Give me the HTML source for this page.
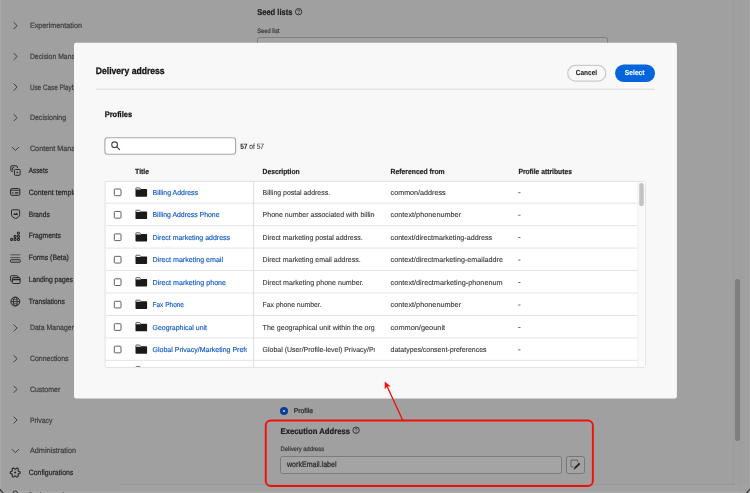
<!DOCTYPE html>
<html>
<head>
<meta charset="utf-8">
<title>Delivery address</title>
<style>
*{box-sizing:border-box;margin:0;padding:0}
html,body{width:750px;height:493px;overflow:hidden;background:#a7a7a7;font-family:"Liberation Sans",sans-serif;}
body{position:relative;color:#2c2c2c}
#win{position:absolute;left:1.3px;top:0;width:747.3px;height:490.8px;background:#a0a0a0;border-radius:0 0 4px 4px}
svg{position:absolute;overflow:visible}
svg.txt{left:0;top:0;will-change:transform;font-family:"Liberation Sans",sans-serif;text-rendering:geometricPrecision}
svg.txt svg{overflow:hidden;position:static}
</style>
</head>
<body>
<div id="win"></div>
<div style="position:absolute;left:121.3px;top:483.6px;width:612.5px;height:1px;background:#989898"></div>
<div style="position:absolute;left:121.3px;top:484.6px;width:627px;height:6.4px;background:#a2a2a2"></div>
<div style="position:absolute;left:733.3px;top:0;width:1px;height:484px;background:#9b9b9b"></div>
<div style="position:absolute;left:740.3px;top:0;width:1px;height:491px;background:#9c9c9c"></div>
<div style="position:absolute;left:257px;top:37.4px;width:350.5px;height:20px;border:1px solid #7e7e7e;border-radius:2.5px;background:#a3a3a3"></div>
<div style="position:absolute;left:279.8px;top:406.7px;width:8.1px;height:8.1px;border-radius:50%;background:#0a4099"></div>
<div style="position:absolute;left:282.9px;top:409.8px;width:2px;height:2px;border-radius:30%;background:#b9b9b9"></div>
<div style="position:absolute;left:280.2px;top:456.1px;width:282px;height:17.9px;border:1px solid #7c7c7c;border-radius:2.5px;background:#a4a4a4"></div>
<div style="position:absolute;left:566.1px;top:456.1px;width:18.9px;height:17.9px;border:1px solid #787878;border-radius:2.5px;background:#a3a3a3"></div>
<svg style="left:0;top:0" width="750" height="493" viewBox="0 0 750 493"><path d="M577.7 462.4 V460.1 H571.0 V466.8 H573.6" fill="none" stroke="#464646" stroke-width="0.65"/><path d="M579.7 463.3 L574.9 468.1" stroke="#222" stroke-width="1.9"/><path d="M574.1 467.4 L575.6 468.9 L573.5 469.6 Z" fill="#333"/></svg>
<div style="position:absolute;left:735px;top:278.8px;width:5px;height:162px;border-radius:2.5px;background:#7e7e7e"></div>
<svg style="left:0;top:0" width="750" height="493" viewBox="0 0 750 493"><path d="M13.90 22.50 L17.10 25.70 L13.90 28.90" fill="none" stroke="#3e3e3e" stroke-width="1.0" stroke-linecap="round" stroke-linejoin="round"/><path d="M13.90 53.30 L17.10 56.50 L13.90 59.70" fill="none" stroke="#3e3e3e" stroke-width="1.0" stroke-linecap="round" stroke-linejoin="round"/><path d="M13.90 83.90 L17.10 87.10 L13.90 90.30" fill="none" stroke="#3e3e3e" stroke-width="1.0" stroke-linecap="round" stroke-linejoin="round"/><path d="M13.90 114.50 L17.10 117.70 L13.90 120.90" fill="none" stroke="#3e3e3e" stroke-width="1.0" stroke-linecap="round" stroke-linejoin="round"/><path d="M12.20 147.30 L15.40 150.50 L18.60 147.30" fill="none" stroke="#3e3e3e" stroke-width="1.0" stroke-linecap="round" stroke-linejoin="round"/><path d="M13.90 324.80 L17.10 328.00 L13.90 331.20" fill="none" stroke="#3e3e3e" stroke-width="1.0" stroke-linecap="round" stroke-linejoin="round"/><path d="M13.90 355.50 L17.10 358.70 L13.90 361.90" fill="none" stroke="#3e3e3e" stroke-width="1.0" stroke-linecap="round" stroke-linejoin="round"/><path d="M13.90 386.20 L17.10 389.40 L13.90 392.60" fill="none" stroke="#3e3e3e" stroke-width="1.0" stroke-linecap="round" stroke-linejoin="round"/><path d="M13.90 416.90 L17.10 420.10 L13.90 423.30" fill="none" stroke="#3e3e3e" stroke-width="1.0" stroke-linecap="round" stroke-linejoin="round"/><path d="M12.20 449.50 L15.40 452.70 L18.60 449.50" fill="none" stroke="#3e3e3e" stroke-width="1.0" stroke-linecap="round" stroke-linejoin="round"/><path d="M13.0 171.2 H11.7 Q10.8 171.2 10.8 170.3 V166.7 Q10.8 165.8 11.7 165.8 H16.4 Q17.3 165.8 17.3 166.7 V168.0" fill="none" stroke="#262626" stroke-width="1.0"/><path d="M14.2 167.5 Q12.2 167.2 12.3 168.9 M12.3 169.6 L12.3 168.4 M12.3 169.6 L13.4 169.6" fill="none" stroke="#262626" stroke-width="0.85"/><rect x="14.45" y="169.45" width="5.65" height="5.85" rx="1.0" fill="none" stroke="#262626" stroke-width="1.0"/><circle cx="17.3" cy="172.4" r="0.8" fill="#262626"/><rect x="10.6" y="188.6" width="9.25" height="6.7" rx="1.2" fill="none" stroke="#262626" stroke-width="1.0"/><path d="M10.6 190.3 H19.85" stroke="#262626" stroke-width="0.85"/><path d="M12.2 192.9 H13.6 M14.9 192.9 H18.4" stroke="#262626" stroke-width="1.4"/><path d="M12.4 209.8 H18.7 Q19.6 209.8 19.6 210.7 V214.6 C19.6 216.6 17.6 217.9 15.55 218.45 C13.5 217.9 11.5 216.6 11.5 214.6 V210.7 Q11.5 209.8 12.4 209.8 Z" fill="none" stroke="#262626" stroke-width="1.0"/><path d="M13.2 215.0 L14.5 212.8 L15.4 214.1 L16.6 212.4 L18.1 215.0 Z" fill="#262626"/><circle cx="11.65" cy="239.45" r="1.05" fill="none" stroke="#262626" stroke-width="1.1"/><circle cx="15.05" cy="239.45" r="1.05" fill="none" stroke="#262626" stroke-width="1.1"/><circle cx="18.45" cy="239.45" r="1.05" fill="none" stroke="#262626" stroke-width="1.1"/><circle cx="15.05" cy="236.3" r="1.05" fill="none" stroke="#262626" stroke-width="1.1"/><circle cx="18.45" cy="236.3" r="1.05" fill="none" stroke="#262626" stroke-width="1.1"/><circle cx="18.45" cy="233.1" r="1.05" fill="none" stroke="#262626" stroke-width="1.1"/><path d="M10.4 254.8 H20.3 M10.4 257.6 H20.3" stroke="#3c3c3c" stroke-width="0.8"/><rect x="10.5" y="259.7" width="9.8" height="2.5" rx="0.6" fill="none" stroke="#262626" stroke-width="0.95"/><path d="M12.2 281.3 H11.6 Q10.6 281.3 10.6 280.3 V276.7 Q10.6 275.7 11.6 275.7 H16.8 Q17.8 275.7 17.8 276.7 V277.2" fill="none" stroke="#262626" stroke-width="1.0"/><rect x="12.4" y="277.5" width="7.7" height="6.0" rx="1.0" fill="none" stroke="#262626" stroke-width="1.0"/><path d="M12.4 279.5 H20.1" stroke="#262626" stroke-width="1.5"/><circle cx="15.3" cy="301.55" r="4.45" fill="none" stroke="#262626" stroke-width="1.0"/><ellipse cx="15.3" cy="301.55" rx="1.9" ry="4.45" fill="none" stroke="#262626" stroke-width="0.85"/><path d="M10.9 301.55 H19.7" stroke="#262626" stroke-width="0.85"/><path d="M11.9 298.9 Q15.3 300.0 18.7 298.9 M11.9 304.2 Q15.3 303.1 18.7 304.2" fill="none" stroke="#262626" stroke-width="0.6"/><path d="M15.20 469.10 L15.50 469.11 L15.83 468.97 L16.29 468.49 L16.83 468.07 L17.29 468.06 L17.67 468.26 L18.04 468.50 L18.26 468.90 L18.17 469.58 L17.99 470.21 L18.03 470.57 L18.19 470.82 L18.33 471.09 L18.62 471.31 L19.26 471.46 L19.89 471.72 L20.13 472.12 L20.15 472.55 L20.13 472.98 L19.89 473.38 L19.26 473.64 L18.62 473.79 L18.33 474.01 L18.19 474.28 L18.03 474.53 L17.99 474.89 L18.17 475.52 L18.26 476.20 L18.04 476.60 L17.68 476.84 L17.29 477.04 L16.83 477.03 L16.29 476.61 L15.83 476.13 L15.50 475.99 L15.20 476.00 L14.90 475.99 L14.57 476.13 L14.11 476.61 L13.57 477.03 L13.11 477.04 L12.72 476.84 L12.36 476.60 L12.14 476.20 L12.23 475.52 L12.41 474.89 L12.37 474.53 L12.21 474.28 L12.07 474.01 L11.78 473.79 L11.14 473.64 L10.51 473.38 L10.27 472.98 L10.25 472.55 L10.27 472.12 L10.51 471.72 L11.14 471.46 L11.78 471.31 L12.07 471.09 L12.21 470.82 L12.37 470.57 L12.41 470.21 L12.23 469.58 L12.14 468.90 L12.36 468.50 L12.73 468.26 L13.11 468.06 L13.57 468.07 L14.11 468.49 L14.57 468.97 L14.90 469.11 L15.20 469.10 Z" fill="none" stroke="#262626" stroke-width="1.1" stroke-linejoin="round"/><circle cx="15.2" cy="472.55" r="1.05" fill="#262626"/><path d="M12.9 493.2 Q13.1 491.0 15.3 491.0 Q17.5 491.0 17.7 493.2" fill="none" stroke="#262626" stroke-width="0.9"/><g transform="translate(298.60 11.70)"><circle cx="0" cy="0" r="3.2" fill="none" stroke="#303030" stroke-width="0.95"/><path d="M-0.95 -0.85 Q-0.95 -1.9 0 -1.9 Q1.0 -1.9 1.0 -0.95 Q1.0 -0.4 0.4 0 Q0 0.3 0 0.75" fill="none" stroke="#383838" stroke-width="0.85"/><circle cx="0" cy="1.7" r="0.5" fill="#383838"/></g><g transform="translate(356.10 430.20)"><circle cx="0" cy="0" r="3.2" fill="none" stroke="#303030" stroke-width="0.95"/><path d="M-0.95 -0.85 Q-0.95 -1.9 0 -1.9 Q1.0 -1.9 1.0 -0.95 Q1.0 -0.4 0.4 0 Q0 0.3 0 0.75" fill="none" stroke="#383838" stroke-width="0.85"/><circle cx="0" cy="1.7" r="0.5" fill="#383838"/></g></svg>
<svg class="txt" width="750" height="493" viewBox="0 0 750 493"><text x="29.90" y="28.10" font-size="7.7" fill="#3e3e3e" stroke="#3e3e3e" stroke-width="0.22" textLength="52.10" lengthAdjust="spacingAndGlyphs">Experimentation</text>
<text x="29.90" y="58.90" font-size="7.7" fill="#3e3e3e" stroke="#3e3e3e" stroke-width="0.22" textLength="68.32" lengthAdjust="spacingAndGlyphs">Decision Management</text>
<text x="29.90" y="89.50" font-size="7.7" fill="#3e3e3e" stroke="#3e3e3e" stroke-width="0.22" textLength="58.67" lengthAdjust="spacingAndGlyphs">Use Case Playbooks</text>
<text x="29.90" y="120.10" font-size="7.7" fill="#3e3e3e" stroke="#3e3e3e" stroke-width="0.22" textLength="36.30" lengthAdjust="spacingAndGlyphs">Decisioning</text>
<text x="29.90" y="150.90" font-size="7.7" fill="#3e3e3e" stroke="#3e3e3e" stroke-width="0.22" textLength="69.54" lengthAdjust="spacingAndGlyphs">Content Management</text>
<text x="29.90" y="330.40" font-size="7.7" fill="#3e3e3e" stroke="#3e3e3e" stroke-width="0.22" textLength="57.28" lengthAdjust="spacingAndGlyphs">Data Management</text>
<text x="29.90" y="361.10" font-size="7.7" fill="#3e3e3e" stroke="#3e3e3e" stroke-width="0.22" textLength="38.70" lengthAdjust="spacingAndGlyphs">Connections</text>
<text x="29.90" y="391.80" font-size="7.7" fill="#3e3e3e" stroke="#3e3e3e" stroke-width="0.22" textLength="30.40" lengthAdjust="spacingAndGlyphs">Customer</text>
<text x="29.90" y="422.50" font-size="7.7" fill="#3e3e3e" stroke="#3e3e3e" stroke-width="0.22" textLength="22.60" lengthAdjust="spacingAndGlyphs">Privacy</text>
<text x="29.90" y="453.10" font-size="7.7" fill="#3e3e3e" stroke="#3e3e3e" stroke-width="0.22" textLength="46.20" lengthAdjust="spacingAndGlyphs">Administration</text>
<text x="28.70" y="172.60" font-size="7.7" fill="#262626" stroke="#262626" stroke-width="0.22" textLength="19.20" lengthAdjust="spacingAndGlyphs">Assets</text>
<text x="28.70" y="194.70" font-size="7.7" fill="#262626" stroke="#262626" stroke-width="0.22" textLength="57.88" lengthAdjust="spacingAndGlyphs">Content templates</text>
<text x="28.70" y="216.50" font-size="7.7" fill="#262626" stroke="#262626" stroke-width="0.22" textLength="21.10" lengthAdjust="spacingAndGlyphs">Brands</text>
<text x="28.70" y="238.30" font-size="7.7" fill="#262626" stroke="#262626" stroke-width="0.22" textLength="32.30" lengthAdjust="spacingAndGlyphs">Fragments</text>
<text x="28.70" y="260.20" font-size="7.7" fill="#262626" stroke="#262626" stroke-width="0.22" textLength="40.20" lengthAdjust="spacingAndGlyphs">Forms (Beta)</text>
<text x="28.70" y="282.20" font-size="7.7" fill="#262626" stroke="#262626" stroke-width="0.22" textLength="44.20" lengthAdjust="spacingAndGlyphs">Landing pages</text>
<text x="28.70" y="304.10" font-size="7.7" fill="#262626" stroke="#262626" stroke-width="0.22" textLength="36.10" lengthAdjust="spacingAndGlyphs">Translations</text>
<text x="28.70" y="475.00" font-size="7.7" fill="#262626" stroke="#262626" stroke-width="0.22" textLength="44.60" lengthAdjust="spacingAndGlyphs">Configurations</text>
<text x="28.70" y="498.00" font-size="7.7" fill="#262626" stroke="#262626" stroke-width="0.22" textLength="42.06" lengthAdjust="spacingAndGlyphs">Business rules</text>
<text x="257.20" y="15.00" font-size="8.65" font-weight="bold" fill="#1e1e1e" stroke="#1e1e1e" stroke-width="0.2" textLength="35.20" lengthAdjust="spacingAndGlyphs">Seed lists</text>
<text x="257.20" y="33.00" font-size="6.5" fill="#3a3a3a" stroke="#3a3a3a" stroke-width="0.22" textLength="22.20" lengthAdjust="spacingAndGlyphs">Seed list</text>
<text x="293.70" y="413.00" font-size="7.0" fill="#262626" stroke="#262626" stroke-width="0.22" textLength="19.30" lengthAdjust="spacingAndGlyphs">Profile</text>
<text x="280.60" y="434.00" font-size="8.4" font-weight="bold" fill="#1c1c1c" stroke="#1c1c1c" stroke-width="0.2" textLength="69.40" lengthAdjust="spacingAndGlyphs">Execution Address</text>
<text x="280.60" y="451.30" font-size="6.4" fill="#3a3a3a" stroke="#3a3a3a" stroke-width="0.22" textLength="43.60" lengthAdjust="spacingAndGlyphs">Delivery address</text>
<text x="287.00" y="467.00" font-size="8.1" fill="#262626" stroke="#262626" stroke-width="0.22" textLength="49.50" lengthAdjust="spacingAndGlyphs">workEmail.label</text></svg>
<svg style="left:0;top:0" width="750" height="493" viewBox="0 0 750 493"><rect x="74.0" y="42.7" width="602.9" height="355.9" rx="2.3" fill="#f8f8f8"/><rect x="96" y="88.65" width="558.8" height="1.1" fill="#dadada"/><rect x="567.75" y="65.45" width="38.1" height="15.7" rx="7.85" fill="#f8f8f8" stroke="#cbcbcb" stroke-width="1.3"/><rect x="615.1" y="64.5" width="39.9" height="17.6" rx="8.8" fill="#0265dc"/><rect x="104.9" y="137.7" width="130.7" height="16.6" rx="2.5" fill="#fff" stroke="#a6a6a6" stroke-width="1.1"/><circle cx="114.6" cy="144.7" r="2.85" fill="none" stroke="#464646" stroke-width="1.15"/><path d="M116.8 146.9 L119.6 149.6" stroke="#464646" stroke-width="1.2" stroke-linecap="round"/><rect x="105.1" y="181.4" width="540.1999999999999" height="185.99999999999997" rx="2" fill="#fff" stroke="#e2e2e2" stroke-width="1"/><rect x="637.5" y="181.9" width="7.2999999999999545" height="184.99999999999997" fill="#fafafa"/><rect x="637.5" y="181.9" width="0.8" height="184.99999999999997" fill="#eeeeee"/><rect x="639.2" y="183.1" width="4.6" height="23.1" rx="2.3" fill="#c3c3c3"/><rect x="105.6" y="202.70" width="531.9" height="1" fill="#e4e4e4"/><rect x="114.3" y="189.00" width="6.7" height="6.7" rx="0.85" fill="#fff" stroke="#606060" stroke-width="1.0"/><g transform="translate(135.5 187.50)"><path d="M0.35 2.3 L0.35 0.9 Q0.35 0.35 0.9 0.35 L4.2 0.35 L5.2 1.7" fill="#f4f4f4" stroke="#222" stroke-width="0.7"/><path d="M0 2.1 L5.0 2.1 L5.5 1.6 L10.9 1.6 Q11.6 1.6 11.6 2.3 L11.6 8.45 Q11.6 9.15 10.9 9.15 L0.7 9.15 Q0 9.15 0 8.45 Z" fill="#1a1a1a"/></g><rect x="518.2" y="192.30" width="2.3" height="0.85" fill="#555"/><rect x="105.6" y="225.15" width="531.9" height="1" fill="#e4e4e4"/><rect x="114.3" y="211.45" width="6.7" height="6.7" rx="0.85" fill="#fff" stroke="#606060" stroke-width="1.0"/><g transform="translate(135.5 209.95)"><path d="M0.35 2.3 L0.35 0.9 Q0.35 0.35 0.9 0.35 L4.2 0.35 L5.2 1.7" fill="#f4f4f4" stroke="#222" stroke-width="0.7"/><path d="M0 2.1 L5.0 2.1 L5.5 1.6 L10.9 1.6 Q11.6 1.6 11.6 2.3 L11.6 8.45 Q11.6 9.15 10.9 9.15 L0.7 9.15 Q0 9.15 0 8.45 Z" fill="#1a1a1a"/></g><rect x="518.2" y="214.75" width="2.3" height="0.85" fill="#555"/><rect x="105.6" y="247.60" width="531.9" height="1" fill="#e4e4e4"/><rect x="114.3" y="233.90" width="6.7" height="6.7" rx="0.85" fill="#fff" stroke="#606060" stroke-width="1.0"/><g transform="translate(135.5 232.40)"><path d="M0.35 2.3 L0.35 0.9 Q0.35 0.35 0.9 0.35 L4.2 0.35 L5.2 1.7" fill="#f4f4f4" stroke="#222" stroke-width="0.7"/><path d="M0 2.1 L5.0 2.1 L5.5 1.6 L10.9 1.6 Q11.6 1.6 11.6 2.3 L11.6 8.45 Q11.6 9.15 10.9 9.15 L0.7 9.15 Q0 9.15 0 8.45 Z" fill="#1a1a1a"/></g><rect x="518.2" y="237.20" width="2.3" height="0.85" fill="#555"/><rect x="105.6" y="270.05" width="531.9" height="1" fill="#e4e4e4"/><rect x="114.3" y="256.35" width="6.7" height="6.7" rx="0.85" fill="#fff" stroke="#606060" stroke-width="1.0"/><g transform="translate(135.5 254.85)"><path d="M0.35 2.3 L0.35 0.9 Q0.35 0.35 0.9 0.35 L4.2 0.35 L5.2 1.7" fill="#f4f4f4" stroke="#222" stroke-width="0.7"/><path d="M0 2.1 L5.0 2.1 L5.5 1.6 L10.9 1.6 Q11.6 1.6 11.6 2.3 L11.6 8.45 Q11.6 9.15 10.9 9.15 L0.7 9.15 Q0 9.15 0 8.45 Z" fill="#1a1a1a"/></g><rect x="518.2" y="259.65" width="2.3" height="0.85" fill="#555"/><rect x="105.6" y="292.50" width="531.9" height="1" fill="#e4e4e4"/><rect x="114.3" y="278.80" width="6.7" height="6.7" rx="0.85" fill="#fff" stroke="#606060" stroke-width="1.0"/><g transform="translate(135.5 277.30)"><path d="M0.35 2.3 L0.35 0.9 Q0.35 0.35 0.9 0.35 L4.2 0.35 L5.2 1.7" fill="#f4f4f4" stroke="#222" stroke-width="0.7"/><path d="M0 2.1 L5.0 2.1 L5.5 1.6 L10.9 1.6 Q11.6 1.6 11.6 2.3 L11.6 8.45 Q11.6 9.15 10.9 9.15 L0.7 9.15 Q0 9.15 0 8.45 Z" fill="#1a1a1a"/></g><rect x="518.2" y="282.10" width="2.3" height="0.85" fill="#555"/><rect x="105.6" y="314.95" width="531.9" height="1" fill="#e4e4e4"/><rect x="114.3" y="301.25" width="6.7" height="6.7" rx="0.85" fill="#fff" stroke="#606060" stroke-width="1.0"/><g transform="translate(135.5 299.75)"><path d="M0.35 2.3 L0.35 0.9 Q0.35 0.35 0.9 0.35 L4.2 0.35 L5.2 1.7" fill="#f4f4f4" stroke="#222" stroke-width="0.7"/><path d="M0 2.1 L5.0 2.1 L5.5 1.6 L10.9 1.6 Q11.6 1.6 11.6 2.3 L11.6 8.45 Q11.6 9.15 10.9 9.15 L0.7 9.15 Q0 9.15 0 8.45 Z" fill="#1a1a1a"/></g><rect x="518.2" y="304.55" width="2.3" height="0.85" fill="#555"/><rect x="105.6" y="337.40" width="531.9" height="1" fill="#e4e4e4"/><rect x="114.3" y="323.70" width="6.7" height="6.7" rx="0.85" fill="#fff" stroke="#606060" stroke-width="1.0"/><g transform="translate(135.5 322.20)"><path d="M0.35 2.3 L0.35 0.9 Q0.35 0.35 0.9 0.35 L4.2 0.35 L5.2 1.7" fill="#f4f4f4" stroke="#222" stroke-width="0.7"/><path d="M0 2.1 L5.0 2.1 L5.5 1.6 L10.9 1.6 Q11.6 1.6 11.6 2.3 L11.6 8.45 Q11.6 9.15 10.9 9.15 L0.7 9.15 Q0 9.15 0 8.45 Z" fill="#1a1a1a"/></g><rect x="518.2" y="327.00" width="2.3" height="0.85" fill="#555"/><rect x="105.6" y="359.85" width="531.9" height="1" fill="#e4e4e4"/><rect x="114.3" y="346.15" width="6.7" height="6.7" rx="0.85" fill="#fff" stroke="#606060" stroke-width="1.0"/><g transform="translate(135.5 344.65)"><path d="M0.35 2.3 L0.35 0.9 Q0.35 0.35 0.9 0.35 L4.2 0.35 L5.2 1.7" fill="#f4f4f4" stroke="#222" stroke-width="0.7"/><path d="M0 2.1 L5.0 2.1 L5.5 1.6 L10.9 1.6 Q11.6 1.6 11.6 2.3 L11.6 8.45 Q11.6 9.15 10.9 9.15 L0.7 9.15 Q0 9.15 0 8.45 Z" fill="#1a1a1a"/></g><rect x="518.2" y="349.45" width="2.3" height="0.85" fill="#555"/><rect x="253.1" y="181.9" width="1" height="184.99999999999997" fill="#dedede"/><rect x="135.8" y="366.1" width="4.6" height="0.8" fill="#666"/></svg>
<svg class="txt" width="750" height="493" viewBox="0 0 750 493"><text x="95.80" y="74.20" font-size="9.55" font-weight="bold" fill="#141414" stroke="#141414" stroke-width="0.3" textLength="68.80" lengthAdjust="spacingAndGlyphs">Delivery address</text>
<text x="575.80" y="75.20" font-size="7.3" font-weight="bold" fill="#262626" stroke="#262626" stroke-width="0.1" textLength="21.30" lengthAdjust="spacingAndGlyphs">Cancel</text>
<text x="624.80" y="75.20" font-size="7.3" font-weight="bold" fill="#fff" stroke="#fff" stroke-width="0.1" textLength="19.80" lengthAdjust="spacingAndGlyphs">Select</text>
<text x="104.70" y="117.00" font-size="8.1" font-weight="bold" fill="#151515" stroke="#151515" stroke-width="0.28" textLength="27.40" lengthAdjust="spacingAndGlyphs">Profiles</text>
<text x="240.20" y="148.70" font-size="7.7" fill="#2e2e2e" stroke="#2e2e2e" stroke-width="0.08" textLength="23.80" lengthAdjust="spacingAndGlyphs"><tspan font-weight="bold">57</tspan> of 57</text>
<text x="135.10" y="174.00" font-size="7.4" font-weight="bold" fill="#222" stroke="#222" stroke-width="0.2" textLength="13.90" lengthAdjust="spacingAndGlyphs">Title</text>
<text x="262.60" y="174.00" font-size="7.4" font-weight="bold" fill="#222" stroke="#222" stroke-width="0.2" textLength="37.00" lengthAdjust="spacingAndGlyphs">Description</text>
<text x="390.60" y="174.00" font-size="7.4" font-weight="bold" fill="#222" stroke="#222" stroke-width="0.2" textLength="54.00" lengthAdjust="spacingAndGlyphs">Referenced from</text>
<text x="518.40" y="174.00" font-size="7.4" font-weight="bold" fill="#222" stroke="#222" stroke-width="0.2" textLength="53.50" lengthAdjust="spacingAndGlyphs">Profile attributes</text>
<svg x="150" y="184.90" width="96.7" height="14"><text x="2.50" y="10.00" font-size="7.2" fill="#1059c6" stroke="#1059c6" stroke-width="0.15" textLength="45.50" lengthAdjust="spacingAndGlyphs">Billing Address</text></svg>
<svg x="260" y="184.90" width="114.8" height="14"><text x="2.60" y="10.00" font-size="7.2" fill="#383838" stroke="#383838" stroke-width="0.12" textLength="67.50" lengthAdjust="spacingAndGlyphs">Billing postal address.</text></svg>
<svg x="388" y="184.90" width="114.8" height="14"><text x="2.60" y="10.00" font-size="7.2" fill="#383838" stroke="#383838" stroke-width="0.12" textLength="55.00" lengthAdjust="spacingAndGlyphs">common/address</text></svg>
<svg x="150" y="207.35" width="96.7" height="14"><text x="2.50" y="10.00" font-size="7.2" fill="#1059c6" stroke="#1059c6" stroke-width="0.15" textLength="67.00" lengthAdjust="spacingAndGlyphs">Billing Address Phone</text></svg>
<svg x="260" y="207.35" width="114.8" height="14"><text x="2.60" y="10.00" font-size="7.2" fill="#383838" stroke="#383838" stroke-width="0.12" textLength="142.70" lengthAdjust="spacingAndGlyphs">Phone number associated with billing address</text></svg>
<svg x="388" y="207.35" width="114.8" height="14"><text x="2.60" y="10.00" font-size="7.2" fill="#383838" stroke="#383838" stroke-width="0.12" textLength="70.50" lengthAdjust="spacingAndGlyphs">context/phonenumber</text></svg>
<svg x="150" y="229.80" width="96.7" height="14"><text x="2.50" y="10.00" font-size="7.2" fill="#1059c6" stroke="#1059c6" stroke-width="0.15" textLength="77.50" lengthAdjust="spacingAndGlyphs">Direct marketing address</text></svg>
<svg x="260" y="229.80" width="114.8" height="14"><text x="2.60" y="10.00" font-size="7.2" fill="#383838" stroke="#383838" stroke-width="0.12" textLength="100.00" lengthAdjust="spacingAndGlyphs">Direct marketing postal address.</text></svg>
<svg x="388" y="229.80" width="114.8" height="14"><text x="2.60" y="10.00" font-size="7.2" fill="#383838" stroke="#383838" stroke-width="0.12" textLength="101.50" lengthAdjust="spacingAndGlyphs">context/directmarketing-address</text></svg>
<svg x="150" y="252.25" width="96.7" height="14"><text x="2.50" y="10.00" font-size="7.2" fill="#1059c6" stroke="#1059c6" stroke-width="0.15" textLength="70.50" lengthAdjust="spacingAndGlyphs">Direct marketing email</text></svg>
<svg x="260" y="252.25" width="114.8" height="14"><text x="2.60" y="10.00" font-size="7.2" fill="#383838" stroke="#383838" stroke-width="0.12" textLength="98.00" lengthAdjust="spacingAndGlyphs">Direct marketing email address.</text></svg>
<svg x="388" y="252.25" width="114.8" height="14"><text x="2.60" y="10.00" font-size="7.2" fill="#383838" stroke="#383838" stroke-width="0.12" textLength="119.49" lengthAdjust="spacingAndGlyphs">context/directmarketing-emailaddress</text></svg>
<svg x="150" y="274.70" width="96.7" height="14"><text x="2.50" y="10.00" font-size="7.2" fill="#1059c6" stroke="#1059c6" stroke-width="0.15" textLength="73.50" lengthAdjust="spacingAndGlyphs">Direct marketing phone</text></svg>
<svg x="260" y="274.70" width="114.8" height="14"><text x="2.60" y="10.00" font-size="7.2" fill="#383838" stroke="#383838" stroke-width="0.12" textLength="101.00" lengthAdjust="spacingAndGlyphs">Direct marketing phone number.</text></svg>
<svg x="388" y="274.70" width="114.8" height="14"><text x="2.60" y="10.00" font-size="7.2" fill="#383838" stroke="#383838" stroke-width="0.12" textLength="122.51" lengthAdjust="spacingAndGlyphs">context/directmarketing-phonenumber</text></svg>
<svg x="150" y="297.15" width="96.7" height="14"><text x="2.50" y="10.00" font-size="7.2" fill="#1059c6" stroke="#1059c6" stroke-width="0.15" textLength="31.50" lengthAdjust="spacingAndGlyphs">Fax Phone</text></svg>
<svg x="260" y="297.15" width="114.8" height="14"><text x="2.60" y="10.00" font-size="7.2" fill="#383838" stroke="#383838" stroke-width="0.12" textLength="59.00" lengthAdjust="spacingAndGlyphs">Fax phone number.</text></svg>
<svg x="388" y="297.15" width="114.8" height="14"><text x="2.60" y="10.00" font-size="7.2" fill="#383838" stroke="#383838" stroke-width="0.12" textLength="70.50" lengthAdjust="spacingAndGlyphs">context/phonenumber</text></svg>
<svg x="150" y="319.60" width="96.7" height="14"><text x="2.50" y="10.00" font-size="7.2" fill="#1059c6" stroke="#1059c6" stroke-width="0.15" textLength="54.50" lengthAdjust="spacingAndGlyphs">Geographical unit</text></svg>
<svg x="260" y="319.60" width="114.8" height="14"><text x="2.60" y="10.00" font-size="7.2" fill="#383838" stroke="#383838" stroke-width="0.12" textLength="140.55" lengthAdjust="spacingAndGlyphs">The geographical unit within the organization</text></svg>
<svg x="388" y="319.60" width="114.8" height="14"><text x="2.60" y="10.00" font-size="7.2" fill="#383838" stroke="#383838" stroke-width="0.12" textLength="54.50" lengthAdjust="spacingAndGlyphs">common/geounit</text></svg>
<svg x="150" y="342.05" width="96.7" height="14"><text x="2.50" y="10.00" font-size="7.2" fill="#1059c6" stroke="#1059c6" stroke-width="0.15" textLength="117.76" lengthAdjust="spacingAndGlyphs">Global Privacy/Marketing Preferences</text></svg>
<svg x="260" y="342.05" width="114.8" height="14"><text x="2.60" y="10.00" font-size="7.2" fill="#383838" stroke="#383838" stroke-width="0.12" textLength="143.88" lengthAdjust="spacingAndGlyphs">Global (User/Profile-level) Privacy/Preferences</text></svg>
<svg x="388" y="342.05" width="114.8" height="14"><text x="2.60" y="10.00" font-size="7.2" fill="#383838" stroke="#383838" stroke-width="0.12" textLength="96.00" lengthAdjust="spacingAndGlyphs">datatypes/consent-preferences</text></svg></svg>
<svg style="left:0;top:0" width="750" height="493" viewBox="0 0 750 493"><rect x="265.75" y="420.5" width="327.1" height="65.55" rx="5" ry="5" fill="none" stroke="#f0100a" stroke-width="1.9"/><path d="M402.6 420 L386.8 385.8" stroke="#f0100a" stroke-width="1.35" fill="none"/><path d="M385.0 381.9 L390.3 386.3 L387.4 386.0 L384.9 388.8 Z" fill="#f0100a" stroke="#f0100a" stroke-width="0.4" stroke-linejoin="round"/></svg>
<svg style="left:0;top:0" width="750" height="493" viewBox="0 0 750 493"><path d="M-0.5 488.8 L3.6 493.6" stroke="#3a3a3a" stroke-width="1.3"/><path d="M750.5 488.6 L745.9 493.6" stroke="#3a3a3a" stroke-width="1.3"/></svg>
</body>
</html>
